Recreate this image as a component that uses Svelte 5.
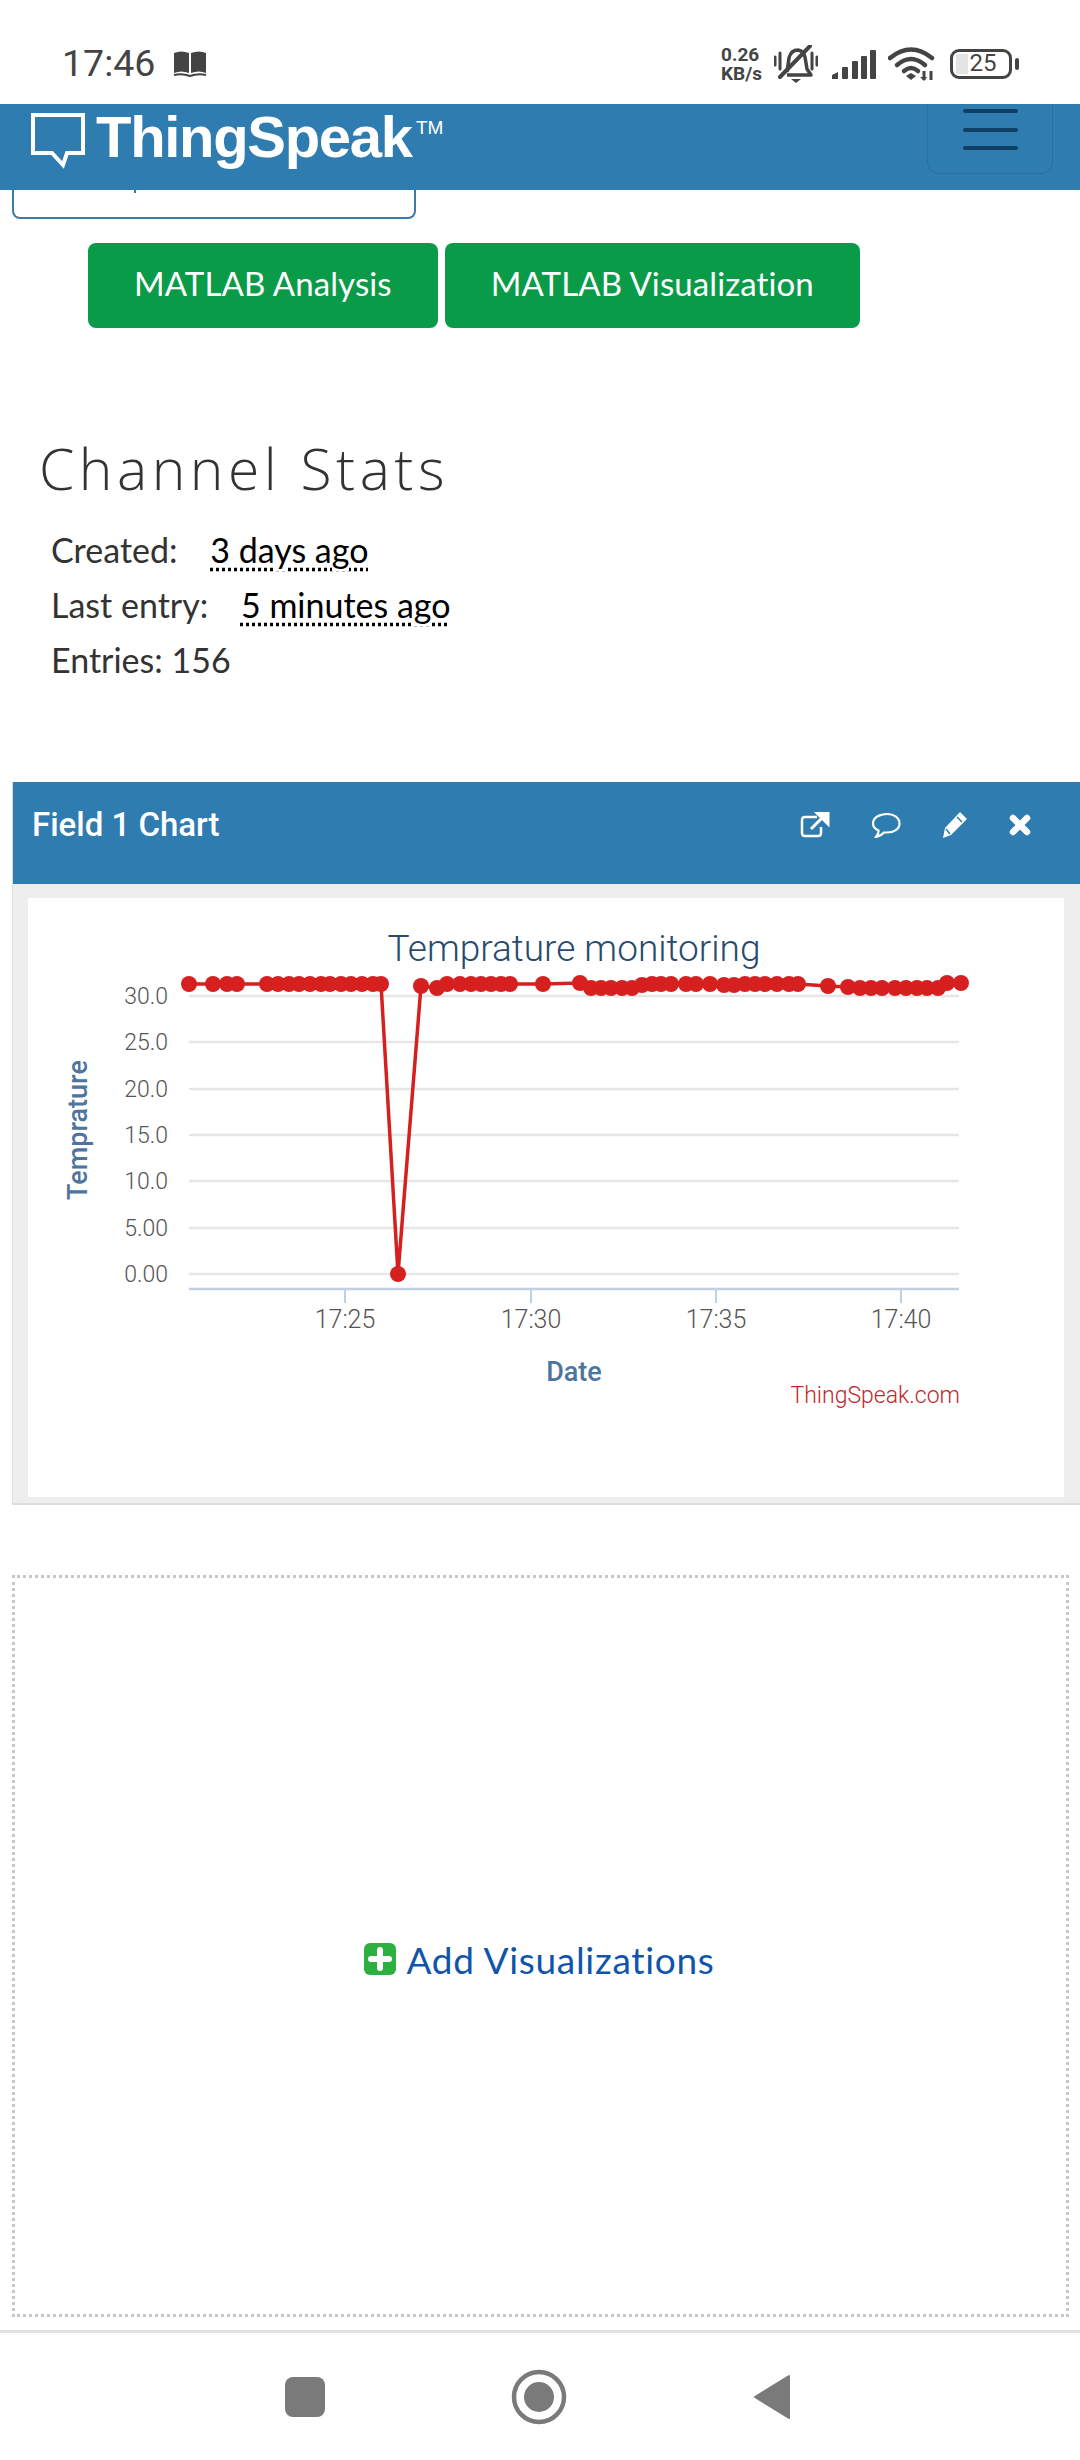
<script>
	// page coordinates of each reading, read off the chart
	const points = [
		[189, 984], [213, 984], [227, 984], [237, 984], [267, 984], [278, 984], [289, 984], [299, 984],
		[310, 984], [321, 984], [330, 984], [341, 984], [351, 984], [362, 984], [373, 984], [381, 984],
		[398, 1274], [421, 986], [437, 988], [447, 984], [460, 984], [471, 984], [481, 984], [491, 984],
		[501, 984], [510, 984], [543, 984], [580, 983], [591, 988], [601, 988], [611, 988], [622, 988],
		[632, 988], [642, 985], [652, 984], [661, 984], [671, 984], [686, 984], [696, 984], [710, 984],
		[724, 985], [734, 985], [745, 984], [755, 984], [765, 984], [777, 984], [789, 984], [798, 984],
		[828, 986], [848, 987], [860, 988], [871, 988], [882, 988], [895, 988], [906, 988], [917, 988],
		[927, 988], [938, 988], [947, 983], [961, 983]
	];
	const line = points.map((p) => p.join(',')).join(' ');
	const grid = [
		{ y: 996, label: '30.0' },
		{ y: 1042, label: '25.0' },
		{ y: 1089, label: '20.0' },
		{ y: 1135, label: '15.0' },
		{ y: 1181, label: '10.0' },
		{ y: 1228, label: '5.00' },
		{ y: 1274, label: '0.00' }
	];
	const ticks = [
		{ x: 345, label: '17:25' },
		{ x: 531, label: '17:30' },
		{ x: 716, label: '17:35' },
		{ x: 901, label: '17:40' }
	];
</script>

<div class="page">
	<!-- Status bar -->
	<div class="status-bar">
		<span class="clock">17:46</span>
		<svg class="book" viewBox="0 0 34 28" width="34" height="28">
			<path d="M1 3 Q8 0 16 3 V23 Q8 20 1 23 Z M18 3 Q26 0 33 3 V23 Q26 20 18 23 Z" fill="#444" />
			<path d="M1 25 Q9 23 17 26 Q25 23 33 25" fill="none" stroke="#444" stroke-width="2" />
		</svg>
		<div class="status-right">
			<div class="speed"><span>0.26</span><span>KB/s</span></div>
			<svg class="bell" viewBox="0 0 44 38" width="44" height="38">
				<path d="M13 27 L15 13 Q17 5 24 5 Q30 6 31 12 L33 24 L37 30 H13" fill="none" stroke="#444" stroke-width="3.5" stroke-linejoin="round" />
				<path d="M17 34 H27 L22 38 Z" fill="#444" />
				<path d="M6 32 L36 1" stroke="#444" stroke-width="4" stroke-linecap="round" />
				<path d="M1 12 V20 M6 8 V24 M38 8 V24 M43 12 V20" stroke="#444" stroke-width="3" stroke-linecap="round" />
			</svg>
			<svg class="signal" viewBox="0 0 44 29" width="44" height="29">
				<path d="M0 29 V25 L6 22 V29 Z" fill="#444" />
				<rect x="10" y="17" width="6" height="12" rx="1" fill="#444" />
				<rect x="20" y="11" width="6" height="18" rx="1" fill="#444" />
				<rect x="29" y="6" width="6" height="23" rx="1" fill="#444" />
				<rect x="38" y="0" width="6" height="29" rx="1" fill="#444" />
			</svg>
			<svg class="wifi" viewBox="0 0 47 34" width="47" height="34">
				<path d="M2 11 Q23 -6 44 11" fill="none" stroke="#444" stroke-width="4.5" stroke-linecap="round" />
				<path d="M9 18 Q23 6 37 18" fill="none" stroke="#444" stroke-width="4.5" stroke-linecap="round" />
				<path d="M16 24 Q23 18 30 24" fill="none" stroke="#444" stroke-width="4.5" stroke-linecap="round" />
				<path d="M18 29 L23 26 L28 29 L23 33 Z" fill="#444" />
				<path d="M36 24 V33 M43 24 V33" stroke="#444" stroke-width="3" />
				<path d="M32 30 L36 34 L39 30" fill="#444" />
			</svg>
			<div class="battery">
				<div class="battery-fill"></div>
				<span>25</span>
			</div>
			<div class="battery-nub"></div>
		</div>
	</div>

	<!-- Nav -->
	<nav class="navbar">
		<svg class="logo-bubble" viewBox="0 0 56 58" width="56" height="58">
			<path d="M3 3 H53 V41 H37 L33 53 L22 41 H3 Z" fill="none" stroke="#fff" stroke-width="4" />
		</svg>
		<span class="logo-text">ThingSpeak</span>
		<span class="logo-tm">TM</span>
		<div class="toggler">
			<i></i><i></i><i></i>
		</div>
	</nav>

	<div class="dropdown-stub"><span></span></div>

	<div class="buttons">
		<button class="green-btn">MATLAB Analysis</button>
		<button class="green-btn">MATLAB Visualization</button>
	</div>

	<h2>Channel Stats</h2>
	<ul class="stats">
		<li>Created: <span class="ago">3 days ago</span></li>
		<li>Last entry: <span class="ago">5 minutes ago</span></li>
		<li>Entries: 156</li>
	</ul>

	<!-- Chart panel -->
	<section class="panel">
		<header class="panel-head">
			<h3>Field 1 Chart</h3>
			<div class="panel-icons">
				<svg viewBox="0 0 30 26" width="30" height="26">
					<path d="M17 5 H5 Q2 5 2 8 V21 Q2 24 5 24 H18 Q21 24 21 21 V15" fill="none" stroke="#fff" stroke-width="2.5" />
					<path d="M11 17 L24 4 M17 1 H28 V12 Z" stroke="#fff" stroke-width="3" fill="#fff" />
				</svg>
				<svg viewBox="0 0 30 26" width="30" height="26">
					<path d="M16 2 C23 2 28.5 6 28.5 11.5 C28.5 17 23 20.5 16 20.5 L13 20.5 Q10 24 5 25 Q8 21 7.5 18.5 Q2 16 2 11.5 C2 6 8 2 16 2 Z" fill="none" stroke="#fff" stroke-width="2.2" />
				</svg>
				<svg viewBox="0 0 26 28" width="26" height="28">
					<path d="M18 1 L25 8 L9 24 L1 27 L3 17 Z" fill="#fff" />
					<path d="M15 6 L20 11 M4 18 L8 23" stroke="#2f7cb1" stroke-width="1.5" />
				</svg>
				<svg viewBox="0 0 22 22" width="22" height="22">
					<path d="M4 4 L18 18 M18 4 L4 18" stroke="#fff" stroke-width="6.5" stroke-linecap="round" />
				</svg>
			</div>
		</header>
		<div class="panel-body">
			<svg class="chart" viewBox="28 898 1036 599" width="1036" height="599">
				<text class="chart-title" x="574" y="961" text-anchor="middle">Temprature monitoring</text>

				{#each grid as g}
					<line x1="189" x2="959" y1={g.y} y2={g.y} stroke="#e6e6e6" stroke-width="2.5" />
					<text class="tick-label" x="168" y={g.y + 8} text-anchor="end">{g.label}</text>
				{/each}

				<line x1="189" x2="959" y1="1289" y2="1289" stroke="#c0d0e0" stroke-width="2.5" />
				{#each ticks as t}
					<line x1={t.x} x2={t.x} y1="1289" y2="1303" stroke="#c0d0e0" stroke-width="2" />
					<text class="tick-label x-label" x={t.x} y="1328" text-anchor="middle">{t.label}</text>
				{/each}

				<polyline points={line} fill="none" stroke="#d62020" stroke-width="3.5" />
				{#each points as p}
					<circle cx={p[0]} cy={p[1]} r="8" fill="#d62020" />
				{/each}

				<text class="axis-title" x="574" y="1381" text-anchor="middle">Date</text>
				<text class="axis-title" x="87" y="1130" text-anchor="middle" transform="rotate(-90 87 1130)">Temprature</text>
				<text class="credit" x="960" y="1403" text-anchor="end">ThingSpeak.com</text>
			</svg>
		</div>
	</section>

	<!-- Add visualizations -->
	<div class="add-box">
		<svg viewBox="0 0 32 32" width="32" height="32">
			<rect width="32" height="32" rx="6" fill="#2db040" />
			<path d="M16 7 V25 M7 16 H25" stroke="#fff" stroke-width="6" stroke-linecap="round" />
		</svg>
		<span>Add Visualizations</span>
	</div>

	<!-- Android nav -->
	<div class="android-nav">
		<div class="nav-square"></div>
		<svg viewBox="0 0 56 56" width="56" height="56">
			<circle cx="28" cy="28" r="25" fill="none" stroke="#7a7a7a" stroke-width="4.5" />
			<circle cx="28" cy="28" r="15" fill="#7a7a7a" />
		</svg>
		<svg viewBox="0 0 38 46" width="38" height="46">
			<path d="M36 2 V44 L2 23 Z" fill="#7a7a7a" stroke="#7a7a7a" stroke-width="2" stroke-linejoin="round" />
		</svg>
	</div>
</div>

<style>
	:global(body) {
		background: #fff;
	}

	.page {
		width: 1080px;
		height: 2460px;
		overflow: hidden;
		background: #fff;
		font-family: Lato, sans-serif;
		color: #333;
	}

	/* Status bar */
	.status-bar {
		height: 104px;
		display: flex;
		align-items: center;
		padding: 24px 61px 0 62px;
		box-sizing: border-box;
		font-family: Roboto, sans-serif;
		color: #444;
	}

	.clock {
		font-size: 37.5px;
		line-height: 1;
	}

	.book {
		margin-left: 18px;
	}

	.status-right {
		margin-left: auto;
		display: flex;
		align-items: center;
	}

	.speed {
		display: flex;
		flex-direction: column;
		font-size: 19px;
		font-weight: 700;
		line-height: 19px;
		width: 53px;
	}

	.signal {
		margin-left: 14px;
	}

	.wifi {
		margin-left: 12px;
	}

	.battery {
		position: relative;
		width: 62px;
		height: 30px;
		margin-left: 15px;
		box-sizing: border-box;
		border: 3.5px solid #444;
		border-radius: 9px;
		font-size: 24px;
		line-height: 23px;
		text-align: center;
	}

	.battery span {
		position: relative;
		padding-left: 4px;
	}

	.battery-fill {
		position: absolute;
		left: 3px;
		top: 2px;
		bottom: 2px;
		width: 12px;
		background: #e4e4e4;
	}

	.battery-nub {
		width: 4px;
		height: 12px;
		margin-left: 3px;
		border-radius: 2px;
		background: #444;
	}

	/* Nav */
	.navbar {
		position: relative;
		height: 86px;
		background: #2f7cb1;
		overflow: hidden;
	}

	.logo-bubble {
		position: absolute;
		left: 30px;
		top: 8px;
	}

	.logo-text {
		position: absolute;
		left: 96px;
		top: -7px;
		font-family: 'Liberation Sans', sans-serif;
		font-weight: 700;
		font-size: 58px;
		line-height: 80px;
		letter-spacing: -1.3px;
		color: #fff;
	}

	.logo-tm {
		position: absolute;
		left: 416px;
		top: 14px;
		font-family: 'Liberation Sans', sans-serif;
		font-size: 19px;
		line-height: 20px;
		color: #fff;
	}

	.toggler {
		position: absolute;
		left: 927px;
		top: -30px;
		width: 126px;
		height: 100px;
		box-sizing: border-box;
		border: 1.5px solid #2a6d9e;
		border-radius: 12px;
	}

	.toggler i {
		position: absolute;
		left: 35px;
		width: 55px;
		height: 4px;
		border-radius: 2px;
		background: #0f3f62;
	}

	.toggler i:nth-child(1) {
		top: 34px;
	}

	.toggler i:nth-child(2) {
		top: 53px;
	}

	.toggler i:nth-child(3) {
		top: 71px;
	}

	.dropdown-stub {
		position: relative;
		width: 404px;
		height: 29px;
		margin-left: 12px;
		box-sizing: border-box;
		border: 2px solid #3a7ca8;
		border-top: none;
		border-radius: 0 0 8px 8px;
	}

	.dropdown-stub span {
		position: absolute;
		left: 120px;
		top: 0;
		width: 2px;
		height: 3px;
		background: #3a7ca8;
	}

	/* Buttons */
	.buttons {
		display: flex;
		gap: 7px;
		margin: 24px 0 0 88px;
	}

	.green-btn {
		height: 85px;
		padding: 0 46px 5px;
		border: none;
		border-radius: 8px;
		background: #0a9b49;
		color: #fff;
		font-family: Lato, sans-serif;
		font-size: 33px;
		letter-spacing: 0.1px;
		white-space: nowrap;
	}

	/* Stats */
	h2 {
		margin: 100px 0 0 39px;
		font-family: 'Open Sans', sans-serif;
		font-size: 57px;
		font-weight: 300;
		line-height: 80px;
		letter-spacing: 4.5px;
		color: #333;
	}

	.stats {
		list-style: none;
		margin: 14px 0 0 51px;
		padding: 0;
		font-size: 34px;
		line-height: 55px;
	}

	.ago {
		margin-left: 24px;
		color: #000;
		text-decoration: underline dotted;
		text-underline-offset: 5px;
	}

	/* Panel */
	.panel {
		margin: 95px 0 0 12px;
		border-bottom: 2px solid #ddd;
		border-left: 1px solid #ddd;
	}

	.panel-head {
		height: 102px;
		display: flex;
		justify-content: space-between;
		box-sizing: border-box;
		padding: 24px 49px 0 19px;
		background: #2f7cb1;
		color: #fff;
	}

	.panel-head h3 {
		margin: 0;
		font-family: Roboto, sans-serif;
		font-size: 33px;
		font-weight: 500;
		line-height: 38px;
	}

	.panel-icons {
		display: flex;
		align-items: center;
		gap: 41px;
		height: 38px;
	}

	.panel-body {
		height: 619px;
		box-sizing: border-box;
		padding: 14px 16px 0 15px;
		background: #eee;
	}

	.chart {
		display: block;
		background: #fff;
	}

	.chart text {
		font-family: Roboto, sans-serif;
	}

	.chart-title {
		font-size: 37px;
		font-weight: 300;
		fill: #274b6d;
	}

	.tick-label {
		font-size: 23px;
		font-weight: 300;
		fill: #555;
	}

	.x-label {
		font-size: 25px;
	}

	.axis-title {
		font-size: 27px;
		font-weight: 500;
		fill: #4d759e;
	}

	.credit {
		font-size: 23px;
		font-weight: 300;
		fill: #c0272d;
	}

	/* Add box */
	.add-box {
		width: 1057px;
		height: 742px;
		margin: 70px 0 0 12px;
		box-sizing: border-box;
		border: 3px dotted #c8c8c8;
		display: flex;
		align-items: center;
		justify-content: center;
		gap: 10px;
		padding: 26px 2px 0 0;
		color: #1155aa;
		font-size: 37px;
		letter-spacing: 0.7px;
	}

	/* Android nav */
	.android-nav {
		position: relative;
		height: 127px;
		margin-top: 13px;
		border-top: 3px solid #e2e2e2;
		display: grid;
		grid-template-columns: 40px 56px 38px;
		justify-content: start;
		align-items: center;
		column-gap: 186px;
		padding: 0 0 15px 285px;
		box-sizing: content-box;
	}

	.nav-square {
		width: 40px;
		height: 40px;
		border-radius: 8px;
		background: #7a7a7a;
	}
</style>
